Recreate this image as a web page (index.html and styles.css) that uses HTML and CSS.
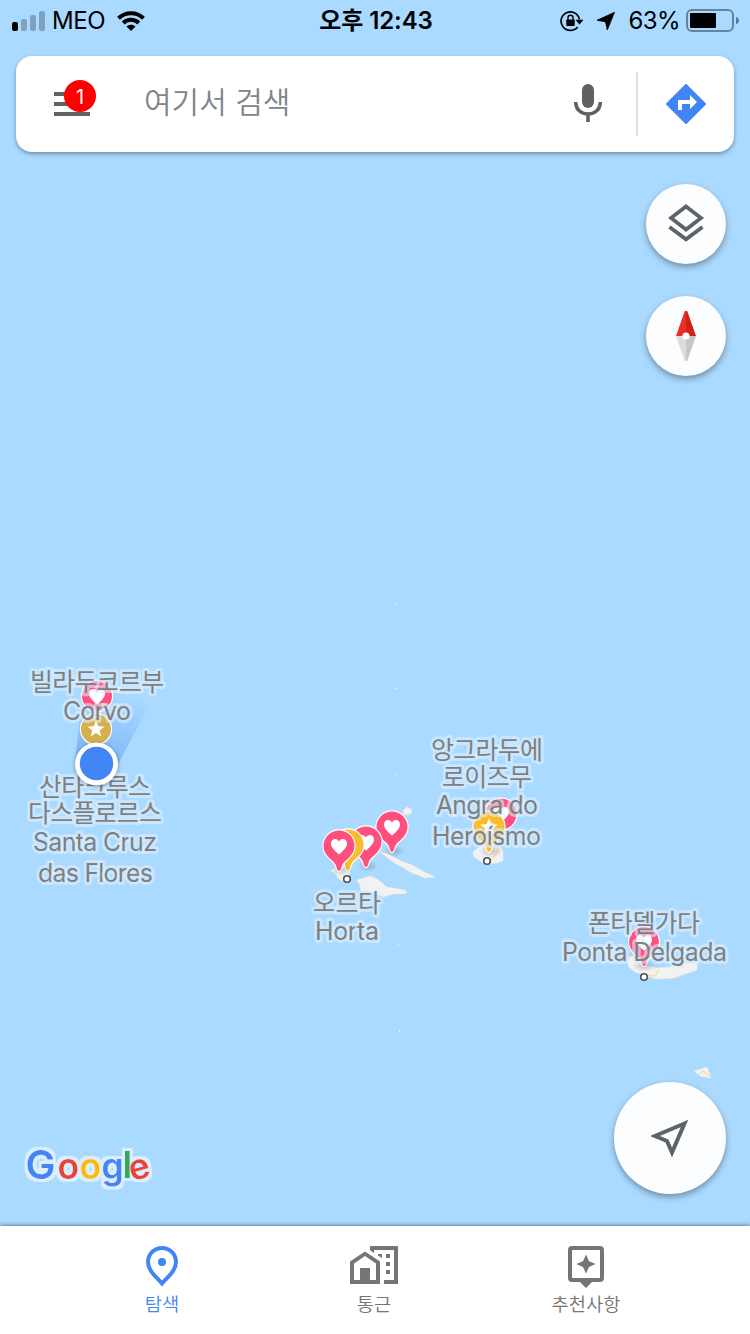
FILE: index.html
```html
<!DOCTYPE html>
<html lang="ko">
  <head>
    <meta charset="utf-8" />
    <title>지도</title>
    <link rel="stylesheet" href="styles.css" />
  </head>
  <body>
    <div class="screen">
      <svg class="map" viewBox="0 0 750 1334">
        <defs>
          <linearGradient id="beam" gradientUnits="userSpaceOnUse" x1="97" y1="765" x2="125" y2="692">
            <stop offset="0" stop-color="#4285f4" stop-opacity="0.45" />
            <stop offset="1" stop-color="#4285f4" stop-opacity="0" />
          </linearGradient>
          <radialGradient id="shade">
            <stop offset="0" stop-color="#000" stop-opacity="0.2" />
            <stop offset="1" stop-color="#000" stop-opacity="0" />
          </radialGradient>
          <filter id="halo" x="-10%" y="-30%" width="120%" height="160%">
            <feMorphology in="SourceAlpha" operator="dilate" radius="3" result="thick" />
            <feGaussianBlur in="thick" stdDeviation="0.7" result="soft" />
            <feFlood flood-color="#dceefd" />
            <feComposite in2="soft" operator="in" result="edge" />
            <feMerge>
              <feMergeNode in="edge" />
              <feMergeNode in="SourceGraphic" />
            </feMerge>
          </filter>
          <path id="pin" d="M0 25C-1.700 25-2.200 22-3 19.500C-5 14-15.500 10.500-15.500 0A15.500 15.500 0 0 1 15.500 0C15.500 10.500 5 14 3 19.500C2.200 22 1.700 25 0 25Z" />
          <path id="heart" d="M0 8.500C-5 4-8 1.500-8-2.500C-8-7.500-2.300-8.500 0-4.500C2.300-8.500 8-7.500 8-2.500C8 1.500 5 4 0 8.500Z" />
          <path id="star" d="M0-9L2.400-2.800L9-2.500L3.800 1.500L5.600 8L0 4.300L-5.600 8L-3.800 1.500L-9-2.500L-2.400-2.800Z" />
        </defs>

        <!-- islands -->
        <g class="land">
          <path d="M331 871L338 866L350 866L349 875L345 882L339 879L335 873Z" />
          <path d="M357 880L370 876L377 879L387 887L405 890L407 893L402 894L393 894L383 897L374 892L361 891L360 885Z" />
          <path d="M380 852L388 854L401 861L412 865L424 872L435 877L425 878L410 872L404 868L396 864L389 859Z" />
          <path d="M403 811L407 807L411 809L412 813L407 815L404 814Z" />
          <path d="M474 851L481 846L500 847L503 851L503 861L497 863L485 864L474 857L473 853Z" />
          <path d="M628 958L632 956L645 965L656 968L671 967L680 963L697 962L697 970L685 974L674 978L656 979L645 975L635 972L628 966Z" />
          <path d="M694 1071L701 1069L707 1067L711 1078L700 1076L697 1073Z" />
        </g>
        <path class="road" d="M490 863L493 858L499 849M644 975L655 976L659 969M698 1075L703 1071L710 1077" />
        <path class="speck" d="M394 603h2v1h-2zM395 688h2v1h-2zM396 773h1v2h-1zM398 944h1v2h-1zM399 1030h1v2h-1z" />

        <path d="M75 762L84 680Q122 670 160 686L118 764Z" fill="url(#beam)" />

        <!-- saved places -->
        <g class="pin" transform="translate(97 696)">
          <circle class="pink" r="15" /><use href="#heart" />
        </g>
        <g class="pin" transform="translate(96 729)">
          <circle class="ochre" r="15" /><use href="#star" transform="scale(.95)" />
        </g>
        <g class="pin" transform="translate(392 827)">
          <ellipse class="shadow" cx="2" cy="24" rx="10" ry="6" /><use class="pink" href="#pin" /><use href="#heart" />
        </g>
        <g class="pin" transform="translate(366 842)">
          <ellipse class="shadow" cx="2" cy="24" rx="10" ry="6" /><use class="pink" href="#pin" /><use href="#heart" />
        </g>
        <g class="pin" transform="translate(348 845)">
          <use class="yellow" href="#pin" />
        </g>
        <g class="pin" transform="translate(339 846)">
          <ellipse class="shadow" cx="2" cy="24" rx="10" ry="6" /><use class="pink" href="#pin" /><use href="#heart" />
        </g>
        <g class="pin" transform="translate(501 814)">
          <circle class="pink" r="15.500" /><use href="#heart" />
        </g>
        <g class="pin" transform="translate(489 827)">
          <ellipse class="shadow" cx="2" cy="24" rx="12" ry="7" /><use class="yellow" href="#pin" /><use href="#star" />
        </g>
        <g class="pin" transform="translate(644 942)">
          <ellipse class="shadow" cx="0" cy="24" rx="12" ry="6" /><use class="pink" href="#pin" transform="scale(.96)" /><use href="#heart" />
        </g>

        <g class="town">
          <circle cx="347" cy="879" r="3.300" />
          <circle cx="487" cy="861" r="3.300" />
          <circle cx="644" cy="977" r="3.300" />
        </g>

        <g class="label">
          <text x="30" y="691" textLength="134">빌라두코르부</text>
          <text x="63" y="719.500" textLength="68">Corvo</text>
          <text x="39" y="795.500" textLength="112">산타크루스</text>
          <text x="28" y="822" textLength="134">다스플로르스</text>
          <text x="33" y="850.500" textLength="124">Santa Cruz</text>
          <text x="38" y="881.500" textLength="115">das Flores</text>
          <text x="313" y="912" textLength="68">오르타</text>
          <text x="315" y="940" textLength="64">Horta</text>
          <text x="431" y="759" textLength="112">앙그라두에</text>
          <text x="442" y="786" textLength="90">로이즈무</text>
          <text x="436" y="814" textLength="102">Angra do</text>
          <text x="432" y="845" textLength="109">Heroísmo</text>
          <text x="588" y="932" textLength="112">폰타델가다</text>
          <text x="562" y="960.500" textLength="165">Ponta Delgada</text>
        </g>

        <g class="me">
          <circle cx="96.500" cy="764" r="21.500" fill="#fff" />
          <circle cx="96.500" cy="763.500" r="16.700" fill="#4285f4" />
        </g>

        <text class="logo" filter="url(#halo)"><tspan class="blue big" x="25.500" y="1179">G</tspan><tspan class="red" x="57.500" y="1179">o</tspan><tspan class="gold" x="79.500" y="1179">o</tspan><tspan class="blue" x="101.500" y="1179">g</tspan><tspan class="green tall" x="122.500" y="1178">l</tspan><tspan class="red" x="132" y="1181.500" rotate="-16">e</tspan></text>
      </svg>

      <div class="status-bar">
        <div class="status-left">
          <svg width="34" height="20" viewBox="0 0 34 20">
            <rect x="0" y="11" width="6" height="9" rx="2" />
            <g opacity="0.25">
              <rect x="9" y="8" width="6" height="12" rx="2" />
              <rect x="18" y="4" width="6" height="16" rx="2" />
              <rect x="27" y="0" width="6" height="20" rx="2" />
            </g>
          </svg>
          <span class="carrier">MEO</span>
          <svg width="28" height="20" viewBox="0 0 28 20">
            <g fill="none" stroke="#000" stroke-width="4">
              <path d="M1.500 7.200C8.500 .5 19.500 .5 26.500 7.200" />
              <path d="M6.200 12C10.500 7.800 17.500 7.800 21.800 12" />
            </g>
            <path d="M14 20L9.500 15.600C12 13.200 16 13.200 18.500 15.600Z" />
          </svg>
        </div>
        <div class="clock">오후 12:43</div>
        <div class="status-right">
          <svg width="24" height="22" viewBox="0 0 24 22">
            <path d="M17.600 17A9.300 9.300 0 1 1 19.500 9.500" fill="none" stroke="#000" stroke-width="1.700" />
            <path d="M15.500 9.800H23.500L19.500 14.500Z" />
            <rect x="6.300" y="9.500" width="8.400" height="6.500" rx="0.800" />
            <path d="M8 10V7.500C8 4.500 13 4.500 13 7.500V10" fill="none" stroke="#000" stroke-width="1.400" />
          </svg>
          <svg class="arrow" width="18" height="18" viewBox="0 0 18 18">
            <path d="M17.500 .3L10.300 18L8.500 9.800L0 8.300Z" stroke="#000" stroke-width="0.800" stroke-linejoin="round" />
          </svg>
          <span class="percent">63%</span>
          <svg width="54" height="24" viewBox="0 0 54 24">
            <rect x="1" y="1" width="46" height="21" rx="5" fill="none" stroke="#000" stroke-opacity="0.4" stroke-width="2" />
            <rect x="4" y="4" width="26" height="15" rx="1" />
            <path d="M50 8C54 9 54 14 50 15Z" fill-opacity="0.45" />
          </svg>
        </div>
      </div>

      <div class="search">
        <div class="menu">
          <span class="menu-line"></span>
          <span class="menu-line"></span>
          <span class="menu-line"></span>
          <span class="badge">1</span>
        </div>
        <div class="search-text">여기서 검색</div>
        <svg class="mic" width="28" height="40" viewBox="0 0 28 40">
          <rect x="8" y="0" width="12" height="24" rx="6" />
          <path d="M1.700 18C1.700 34 26.300 34 26.300 18M14 29V38" fill="none" stroke="#616161" stroke-width="3.600" />
        </svg>
        <div class="divider"></div>
        <svg width="40" height="40" viewBox="0 0 40 40">
          <path d="M20 1L39 20L20 39L1 20Z" fill="#4285f4" stroke="#4285f4" stroke-width="2" stroke-linejoin="round" />
          <path d="M12 26V16H24V11L31 18L24 25V20H16V26Z" fill="#fff" />
        </svg>
      </div>

      <div class="controls">
        <div class="round">
          <svg width="36" height="40" viewBox="0 0 36 40">
            <g fill="none" stroke="#5f6368" stroke-width="3.800">
              <path d="M18 2.500L33 14L18 25.500L3 14Z" />
              <path d="M1.500 23L18 35.300L34.500 23" />
            </g>
          </svg>
        </div>
        <div class="round">
          <svg width="20" height="50" viewBox="0 0 20 50">
            <path d="M10 0H8.800L0 25H10Z" fill="#eb2f27" />
            <path d="M10 0H11.200L20 25H10Z" fill="#d41f17" />
            <path d="M0 25H10V50H8.800Z" fill="#dcdcdc" />
            <path d="M20 25H10V50H11.200Z" fill="#c6c6c6" />
            <circle cx="10" cy="25" r="3.600" fill="#fff" />
          </svg>
        </div>
        <div class="round locate">
          <svg width="38" height="38" viewBox="0 0 38 38">
            <path d="M33.500 4.500L4 17L16 22L21 33.500Z" fill="none" stroke="#5f6368" stroke-width="4" />
          </svg>
        </div>
      </div>

      <div class="tabs">
        <div class="tab active">
          <svg width="32" height="42" viewBox="0 0 32 42">
            <path d="M16 2C8 2 2 8.300 2 16C2 25 11 31.500 16 37.500C21 31.500 30 25 30 16C30 8.300 24 2 16 2Z" fill="none" stroke="#4285f4" stroke-width="4" />
            <circle cx="16" cy="16" r="4" />
          </svg>
          <span>탐색</span>
        </div>
        <div class="tab">
          <svg width="48" height="42" viewBox="0 0 48 42">
            <path d="M0 15.500L15 5.500L30 15.500V38H0ZM4 17.500V34H10V22H20V34H26V17.500L15 10Z" fill-rule="evenodd" />
            <path d="M20 0H48V38H34V34H44V4H24V7L20 4.300Z" />
            <path d="M28 8H32V12L28 9.500ZM36 8H40V12H36ZM36 16H40V20H36ZM36 24H40V28H36Z" />
          </svg>
          <span>통근</span>
        </div>
        <div class="tab">
          <svg width="36" height="42" viewBox="0 0 36 42">
            <path d="M4 0H32Q36 0 36 4V32Q36 36 32 36H24L18 42L12 36H4Q0 36 0 32V4Q0 0 4 0ZM4 4V32H32V4Z" fill-rule="evenodd" />
            <path d="M18 8.500L21 15.200L27.700 18L21 20.900L18 27.600L15 20.900L8.300 18L15 15.200Z" />
          </svg>
          <span>추천사항</span>
        </div>
      </div>
    </div>
  </body>
</html>
```
FILE: styles.css
```css
body {
  margin: 0;
  font-family: Inter, "Noto Sans CJK KR", sans-serif;
}

.screen {
  position: relative;
  display: flex;
  flex-direction: column;
  width: 750px;
  height: 1334px;
  background: #aadaff;
  overflow: hidden;
}

svg {
  display: block;
  flex: none;
}

.map {
  position: absolute;
  top: 0;
  left: 0;
  width: 750px;
  height: 1334px;
}

.land {
  fill: #f2f2f2;
  stroke: #f7ebd5;
  stroke-width: 0.6;
}

.road {
  fill: none;
  stroke: #fbdc9b;
  stroke-width: 1.2;
}

.speck {
  fill: #e8f1f6;
}

.pin {
  fill: #fff;
}

.pink,
.yellow,
.ochre {
  stroke: #fff;
  stroke-width: 2.4;
  paint-order: stroke;
}

.pink {
  fill: #ff4f7e;
}

.yellow {
  fill: #fbbc2c;
}

.ochre {
  fill: #d6b04c;
}

.shadow {
  fill: url(#shade);
}

.town {
  fill: #fff;
  stroke: #4d4d4d;
  stroke-width: 1.6;
}

.label {
  font-size: 25px;
  font-weight: 400;
  fill: #7f7f7f;
  stroke: rgba(222, 240, 255, 0.6);
  stroke-width: 6px;
  stroke-linejoin: round;
  paint-order: stroke;
}

.me {
  filter: drop-shadow(0 1px 2px rgba(0, 0, 0, 0.35));
}

.logo {
  font-size: 35.5px;
  font-weight: 600;
}

.big {
  font-size: 40px;
}

.tall {
  font-size: 37px;
}

.blue {
  fill: #4285f4;
}

.red {
  fill: #ea4335;
}

.gold {
  fill: #fbbc05;
}

.green {
  fill: #34a853;
}

.status-bar {
  position: relative;
  display: grid;
  grid-template-columns: 1fr auto 1fr;
  align-items: center;
  box-sizing: border-box;
  height: 40px;
  padding: 1px 10px 0 12px;
  font-size: 24px;
  line-height: 39px;
  color: #000;
}

.status-left,
.status-right {
  display: flex;
  align-items: center;
}

.status-right {
  justify-content: flex-end;
}

.carrier {
  margin: 0 12px 0 6px;
  letter-spacing: -0.4px;
}

.clock {
  font-weight: 600;
  letter-spacing: -0.1px;
}

.arrow {
  margin-left: 13px;
}

.percent {
  margin: 0 6px 0 14px;
  letter-spacing: -0.6px;
}

.search {
  position: relative;
  display: flex;
  align-items: center;
  box-sizing: border-box;
  height: 96px;
  margin: 16px 16px 0;
  padding: 0 28px 0 38px;
  border-radius: 16px;
  background: #fff;
  box-shadow: 0 2px 4px rgba(0, 0, 0, 0.35);
}

.menu {
  position: relative;
  display: flex;
  flex-direction: column;
  gap: 6px;
  width: 36px;
}

.menu-line {
  height: 4px;
  background: #616161;
}

.badge {
  position: absolute;
  top: -12px;
  left: 10px;
  width: 32px;
  height: 32px;
  border-radius: 50%;
  background: #f00;
  color: #fff;
  font-size: 20px;
  line-height: 34px;
  text-align: center;
}

.search-text {
  flex: 1;
  margin-left: 54px;
  padding-bottom: 5px;
  font-size: 30px;
  font-weight: 350;
  line-height: 40px;
  color: #80868b;
}

.mic {
  fill: #616161;
}

.divider {
  width: 2px;
  height: 64px;
  margin: 0 28px 0 34px;
  background: #e0e0e0;
}

.controls {
  position: relative;
  flex: 1;
  display: flex;
  flex-direction: column;
  align-items: flex-end;
  gap: 32px;
  padding: 32px 24px;
}

.round {
  display: flex;
  align-items: center;
  justify-content: center;
  width: 80px;
  height: 80px;
  border-radius: 50%;
  background: #fcfdff;
  box-shadow: 0 3px 6px rgba(0, 0, 0, 0.35);
}

.locate {
  width: 112px;
  height: 112px;
  margin-top: auto;
}

.tabs {
  position: relative;
  display: grid;
  grid-template-columns: repeat(3, 212px);
  justify-content: center;
  box-sizing: border-box;
  height: 108px;
  padding: 20px 2px 0 0;
  background: #fff;
  box-shadow: 0 -1px 4px rgba(0, 0, 0, 0.4);
}

.tab {
  display: flex;
  flex-direction: column;
  align-items: center;
  font-size: 18.7px;
  font-weight: 350;
  line-height: 24px;
  color: #757575;
  fill: #757575;
}

.tab span {
  margin-top: 5px;
}

.active {
  color: #4285f4;
  fill: #4285f4;
}
```
